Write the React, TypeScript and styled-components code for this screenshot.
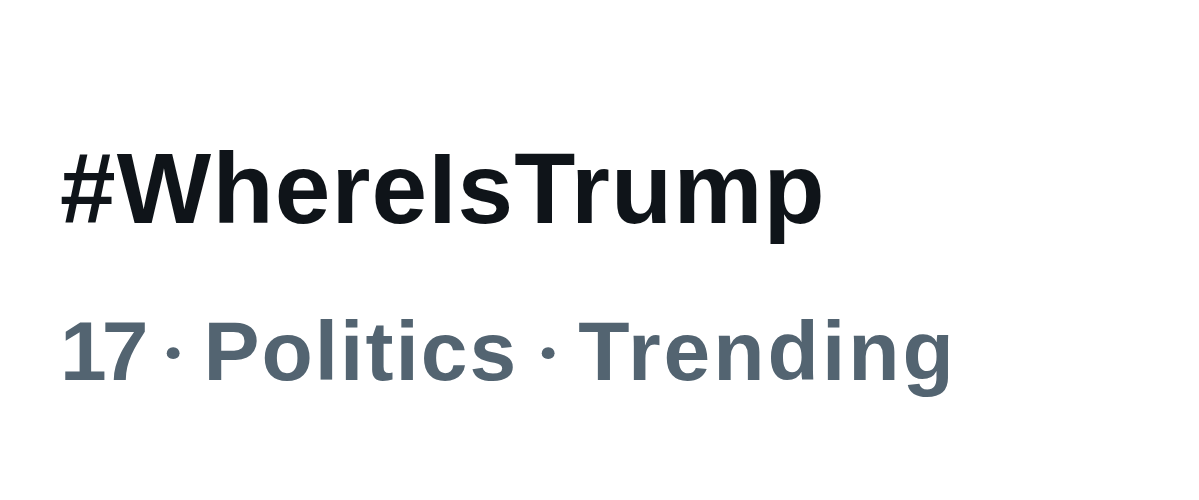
import React, { FC } from 'react';
import styled, { createGlobalStyle } from 'styled-components';

const GlobalStyle = createGlobalStyle`
	html, body {
		margin: 0;
		padding: 0;
		background: #ffffff;
	}
	body {
		font-family: 'Liberation Sans', Arial, sans-serif;
	}
`;

const Trend = styled('div')`
	display: flex;
	flex-direction: column;
	gap: 53px;
	width: 1199px;
	height: 500px;
	box-sizing: border-box;
	padding: 128px 0 0 60px;
	background: #ffffff;
`;

const Hashtag = styled('div')`
	font-size: 100px;
	line-height: 120px;
	font-weight: 700;
	letter-spacing: 1.2px;
	color: #0f1419;
	white-space: nowrap;
`;

const Meta = styled('div')`
	display: flex;
	align-items: baseline;
	font-size: 84px;
	line-height: 100px;
	font-weight: 700;
	color: #536471;
	white-space: nowrap;
`;

const Word = styled('span')<{ $spacing: number }>`
	letter-spacing: ${(p) => p.$spacing}px;
`;

const Dot = styled('span')`
	display: inline-block;
	width: 60px;
	text-align: center;
	font-family: Roboto, 'Liberation Sans', sans-serif;
	font-size: 80px;
`;

const parts = [
	{ text: '17', spacing: -5 },
	{ text: 'Politics', spacing: 2 },
	{ text: 'Trending', spacing: 3 },
];

const App: FC = () => {
	return (
		<>
			<GlobalStyle />
			<Trend>
				<Hashtag>{'#WhereIsTrump'}</Hashtag>
				<Meta>
					{parts.map((p, i) => (
						<React.Fragment key={p.text}>
							{i > 0 && <Dot>{'·'}</Dot>}
							<Word $spacing={p.spacing}>{p.text}</Word>
						</React.Fragment>
					))}
				</Meta>
			</Trend>
		</>
	);
};

export default App;
